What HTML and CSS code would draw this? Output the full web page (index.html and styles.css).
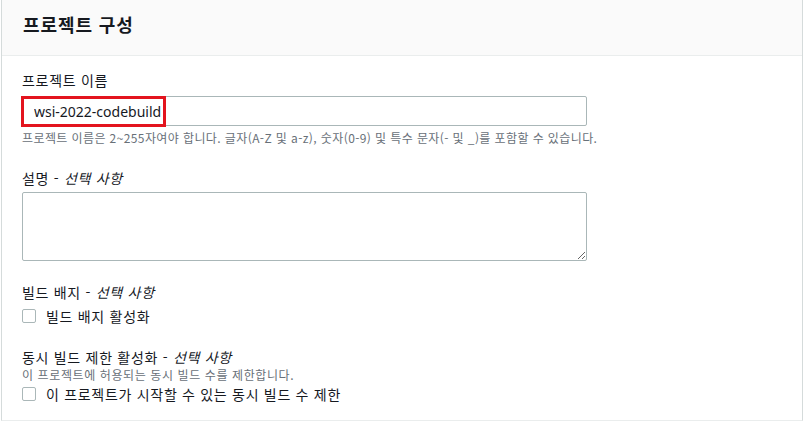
FILE: index.html
```html
<!DOCTYPE html>
<html lang="ko">
<head>
<meta charset="utf-8">
<title>프로젝트 구성</title>
<link rel="stylesheet" href="styles.css">
</head>
<body>
<section class="panel">
  <header class="panel-header">
    <h2 class="panel-title">프로젝트 구성</h2>
  </header>
  <div class="panel-body">
    <div class="field field-name">
      <label class="label">프로젝트 이름</label>
      <div class="input-wrap">
        <input class="input" type="text" value="wsi-2022-codebuild">
        <span class="highlight"></span>
      </div>
      <p class="hint hint-name">프로젝트 이름은 2~255자여야 합니다. 글자(A-Z 및 a-z), 숫자(0-9) 및 특수 문자(- 및 _)를 포함할 수 있습니다.</p>
    </div>
    <div class="field field-desc">
      <label class="label">설명 - <i>선택 사항</i></label>
      <textarea class="textarea"></textarea>
    </div>
    <div class="field field-badge">
      <label class="label">빌드 배지 - <i>선택 사항</i></label>
      <label class="check"><span class="box"></span><span>빌드 배지 활성화</span></label>
    </div>
    <div class="field field-limit">
      <label class="label">동시 빌드 제한 활성화 - <i>선택 사항</i></label>
      <p class="hint hint-tight">이 프로젝트에 허용되는 동시 빌드 수를 제한합니다.</p>
      <label class="check check-tight"><span class="box"></span><span>이 프로젝트가 시작할 수 있는 동시 빌드 수 제한</span></label>
    </div>
  </div>
</section>
</body>
</html>
```
FILE: styles.css
```css
* { box-sizing: border-box; }
html, body { margin: 0; padding: 0; background: #ffffff; }
body {
  font-family: "Noto Sans", "Noto Sans CJK KR", sans-serif;
  color: #16191f;
  font-size: 14px;
  line-height: 20px;
}
.panel {
  width: 802px;
  height: 421px;
  margin-left: 1px;
  border-left: 1px solid #d5dbdb;
  border-right: 1px solid #d5dbdb;
  border-bottom: 1px solid #eaeded;
  background: #fff;
}
.panel-header {
  background: #fafafa;
  border-bottom: 1px solid #eaeded;
  height: 56px;
  padding: 12px 21px 0;
}
.panel-title {
  margin: 0;
  font-size: 18px;
  line-height: 24px;
  font-weight: 700;
  letter-spacing: 0.05em;
  font-family: "Noto Sans CJK KR", sans-serif;
}
.panel-body {
  padding: 14px 20px 0;
  display: flex;
  flex-direction: column;
}
.field { display: flex; flex-direction: column; }
.label {
  display: block;
  font-family: "Noto Sans CJK KR", sans-serif;
  font-size: 14px;
  line-height: 20px;
  letter-spacing: 0.05em;
}
.label i { font-style: italic; }
.input-wrap {
  position: relative;
  margin-top: 6px;
  width: 565px;
}
.input {
  display: block;
  width: 565px;
  height: 30px;
  border: 1px solid #aab7b8;
  border-radius: 2px;
  padding: 0 10px 0 11px;
  font-family: "Noto Sans", "Noto Sans CJK KR", sans-serif;
  font-size: 14px;
  color: #16191f;
  background: #fff;
  outline: none;
}
.highlight {
  position: absolute;
  left: -1px;
  top: 0;
  width: 145px;
  height: 31px;
  border: 3px solid #e3141e;
}
.hint {
  margin: 4px 0 0;
  font-family: "Noto Sans CJK KR", sans-serif;
  font-size: 12px;
  line-height: 16px;
  color: #687078;
  letter-spacing: 0.6px;
}
.hint-name { letter-spacing: 0.4px; }
.field-desc { margin-top: 22px; }
.textarea {
  display: block;
  margin-top: 4px;
  width: 565px;
  height: 69px;
  border: 1px solid #aab7b8;
  border-radius: 2px;
  font-family: "Noto Sans", sans-serif;
  font-size: 14px;
  outline: none;
}
.field-badge { margin-top: 21px; }
.check {
  display: flex;
  align-items: center;
  gap: 10px;
  margin-top: 4px;
  font-family: "Noto Sans CJK KR", sans-serif;
  font-size: 14px;
  line-height: 20px;
  letter-spacing: 0.05em;
}
.check-tight { margin-top: 1px; }
.box {
  width: 14px;
  height: 14px;
  border: 1px solid #aab7b8;
  border-radius: 2px;
  background: #fff;
  flex: none;
}
.field-limit { margin-top: 21px; }
.hint-tight { margin-top: 0; }
```
